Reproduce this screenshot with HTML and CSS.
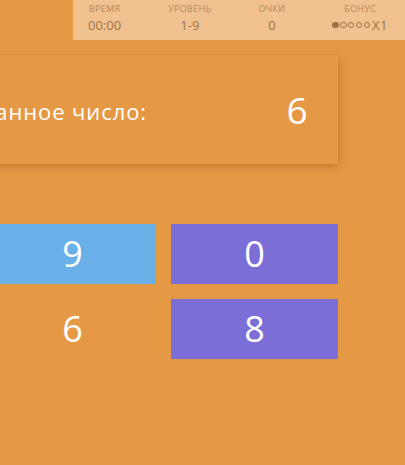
FILE: index.html
```html
<!DOCTYPE html>
<html lang="ru">
<head>
<meta charset="utf-8">
<link rel="stylesheet" href="styles.css">
</head>
<body>
<div class="page">
  <header class="stats">
    <div class="stat">
      <div class="stat-label">Время</div>
      <div class="stat-value">00:00</div>
    </div>
    <div class="stat">
      <div class="stat-label">Уровень</div>
      <div class="stat-value">1-9</div>
    </div>
    <div class="stat">
      <div class="stat-label">Очки</div>
      <div class="stat-value">0</div>
    </div>
    <div class="stat">
      <div class="stat-label">Бонус</div>
      <div class="stat-value bonus">
        <span class="dot filled"></span><span class="dot"></span><span class="dot"></span><span class="dot"></span><span class="dot"></span><span class="mult">X1</span>
      </div>
    </div>
  </header>

  <section class="task">
    <span class="task-label">Загаданное число:</span>
    <span class="task-num">6</span>
  </section>

  <section class="grid">
    <div class="cell blue">9</div>
    <div class="cell purple">0</div>
    <div class="cell plain">6</div>
    <div class="cell purple">8</div>
  </section>
</div>
</body>
</html>
```

FILE: styles.css
```css
html, body {
  margin: 0;
  padding: 0;
  background: #e69944;
  overflow: hidden;
}
body {
  font-family: "Open Sans", "Noto Sans", sans-serif;
  color: #fff;
  width: 405px;
  height: 465px;
}
.page {
  display: flex;
  flex-direction: column;
}
.stats {
  margin-left: 73px;
  height: 40px;
  background: #f2c190;
  display: flex;
  justify-content: space-between;
  align-items: flex-start;
  padding: 3px 17px 0 15px;
  box-sizing: border-box;
}
.stat {
  display: flex;
  flex-direction: column;
  align-items: center;
}
.stat-label {
  font-size: 9px;
  text-transform: uppercase;
  color: #b3895c;
  line-height: 12px;
  letter-spacing: 0.3px;
}
.stat-value {
  font-size: 13px;
  color: #9d7348;
  line-height: 18px;
  margin-top: 1px;
}
.bonus {
  display: flex;
  align-items: center;
  gap: 1.6px;
}
.dot {
  width: 4.2px;
  height: 4.2px;
  border: 0.9px solid #9d7348;
  border-radius: 50%;
}
.dot.filled {
  background: #9d7348;
  width: 6.4px;
  height: 6.4px;
  border: 0;
}
.mult {
  margin-left: 0.5px;
  letter-spacing: 0.5px;
}
.task {
  margin-top: 15px;
  margin-left: -80px;
  width: 418px;
  height: 109px;
  box-sizing: border-box;
  background: #e69944;
  box-shadow: 1px 3px 8px rgba(120, 70, 20, 0.35);
  display: flex;
  justify-content: flex-end;
  align-items: center;
  padding-right: 30px;
}
.task-label {
  font-size: 22px;
  letter-spacing: 0.9px;
  margin-right: 139px;
  white-space: nowrap;
  margin-top: 2px;
}
.task-num {
  font-size: 37px;
  width: 22px;
  text-align: center;
  line-height: 1;
}
.grid {
  margin-top: 60px;
  margin-left: -11px;
  display: grid;
  grid-template-columns: 167px 167px;
  grid-auto-rows: 60px;
  gap: 15px;
}
.cell {
  display: flex;
  align-items: center;
  justify-content: center;
  font-size: 36px;
  line-height: 1;
}
.blue { background: #69afe8; }
.purple { background: #7b6ed7; }
.plain { background: transparent; }
```
